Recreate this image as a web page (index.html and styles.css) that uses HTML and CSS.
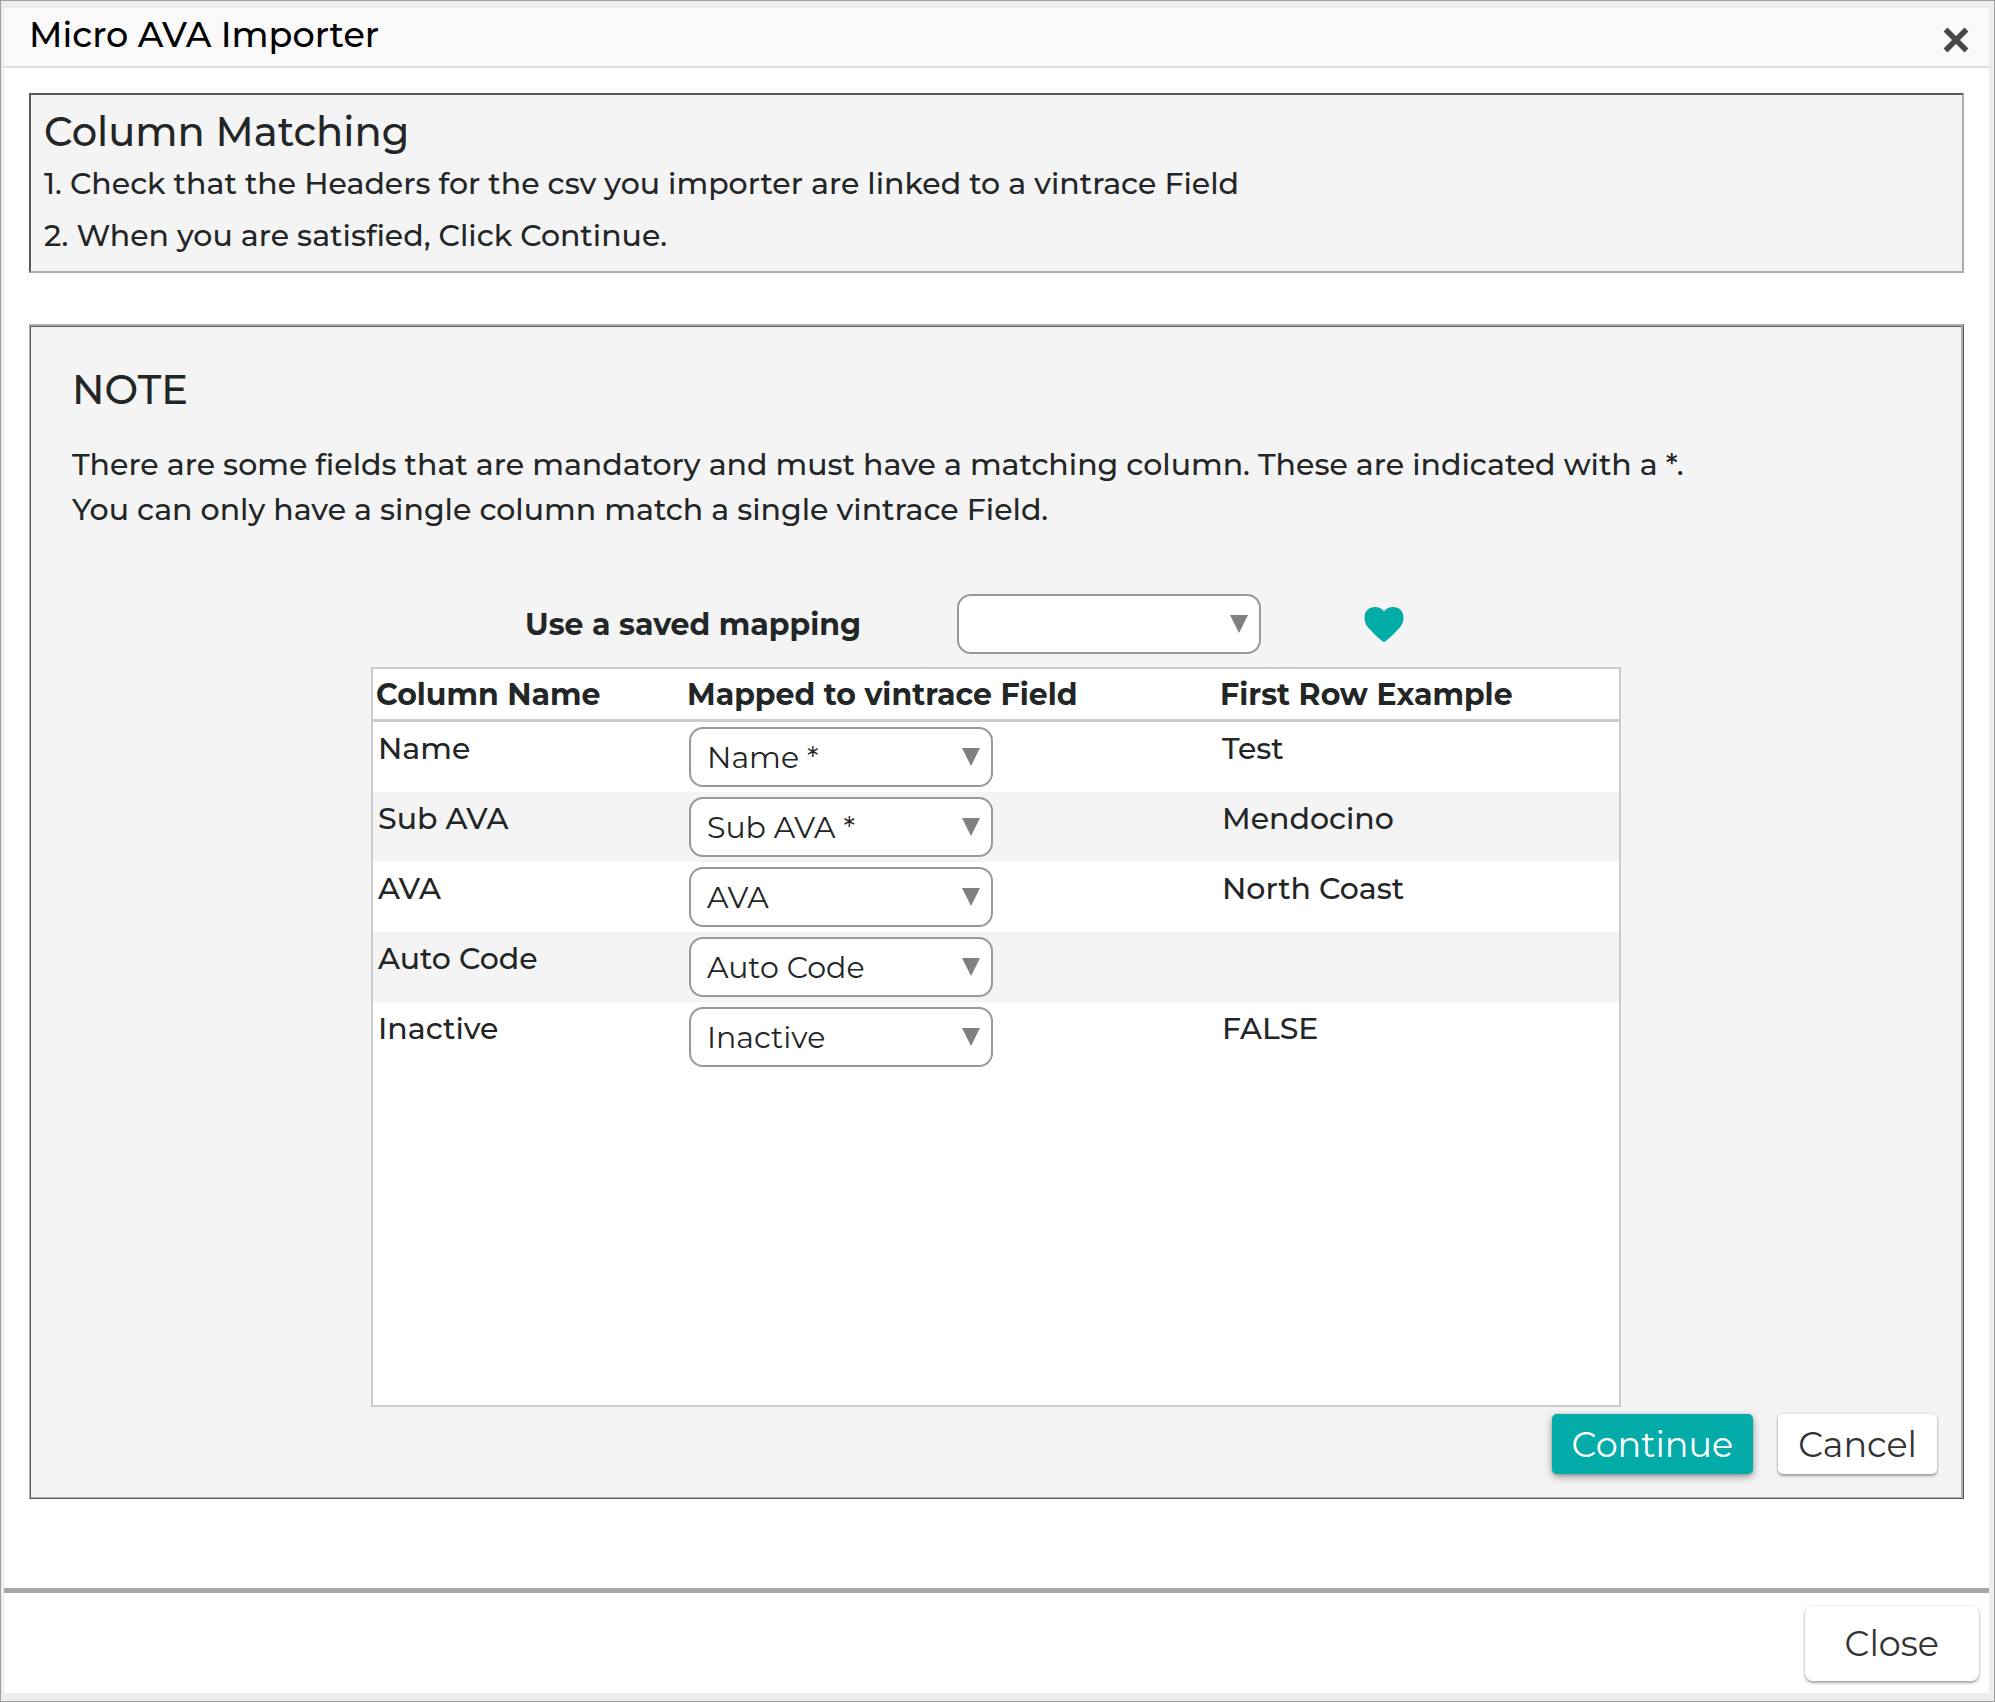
FILE: index.html
```html
<!DOCTYPE html>
<html lang="en">
<head>
  <meta charset="utf-8">
  <meta name="viewport" content="width=device-width, initial-scale=1">
  <title>Micro AVA Importer</title>
  <link rel="stylesheet" href="styles.css">
</head>
<body>
  <div class="dialog" role="dialog" aria-labelledby="dialog-title">
    <header class="dialog-header">
      <h1 class="dialog-title" id="dialog-title">Micro AVA Importer</h1>
      <button class="icon-button dialog-dismiss" type="button" aria-label="Close dialog">
        <svg width="26" height="26" viewBox="0 0 26 26" aria-hidden="true">
          <path d="M2.500 2.500 L23.500 23.500 M23.500 2.500 L2.500 23.500" fill="none" stroke="#474949" stroke-width="5.500"/>
        </svg>
      </button>
    </header>

    <main class="dialog-body">
      <section class="instructions">
        <h2 class="section-title">Column Matching</h2>
        <p>1. Check that the Headers for the csv you importer are linked to a vintrace Field</p>
        <p>2. When you are satisfied, Click Continue.</p>
      </section>

      <section class="matching">
        <div class="note">
          <h2 class="note-title">NOTE</h2>
          <p>There are some fields that are mandatory and must have a matching column. These are indicated with a *.<br>You can only have a single column match a single vintrace Field.</p>
        </div>

        <div class="mapping">
          <div class="saved">
            <label class="saved-label" for="saved-mapping">Use a saved mapping</label>
            <select class="select" id="saved-mapping"><option></option></select>
            <button class="icon-button saved-favourite" type="button" aria-label="Save this mapping">
              <svg width="40" height="37" viewBox="0 0 40 37" aria-hidden="true">
                <path d="M20 36 C17.500 35 11 29 6 23.500 C2 19.500 0.500 16 0.500 11.500 C0.500 5 5 1 11 1 C15 1 18 2.500 20 5.500 C22 2.500 25 1 29 1 C35 1 39.500 5 39.500 11.500 C39.500 16 38 19.500 34 23.500 C29 29 22.500 35 20 36 Z" fill="#03aca8"/>
              </svg>
            </button>
          </div>

          <div class="table-box">
            <table class="columns">
              <thead>
                <tr>
                  <th class="col-name" scope="col">Column Name</th>
                  <th class="col-field" scope="col">Mapped to vintrace Field</th>
                  <th scope="col">First Row Example</th>
                </tr>
              </thead>
              <tbody>
                <tr>
                  <td>Name</td>
                  <td><select class="select" aria-label="Field for Name"><option>Name *</option></select></td>
                  <td>Test</td>
                </tr>
                <tr>
                  <td>Sub AVA</td>
                  <td><select class="select" aria-label="Field for Sub AVA"><option>Sub AVA *</option></select></td>
                  <td>Mendocino</td>
                </tr>
                <tr>
                  <td>AVA</td>
                  <td><select class="select" aria-label="Field for AVA"><option>AVA</option></select></td>
                  <td>North Coast</td>
                </tr>
                <tr>
                  <td>Auto Code</td>
                  <td><select class="select" aria-label="Field for Auto Code"><option>Auto Code</option></select></td>
                  <td></td>
                </tr>
                <tr>
                  <td>Inactive</td>
                  <td><select class="select" aria-label="Field for Inactive"><option>Inactive</option></select></td>
                  <td>FALSE</td>
                </tr>
              </tbody>
            </table>
          </div>
        </div>

        <div class="actions">
          <button class="button button-primary" type="button">Continue</button>
          <button class="button" type="button">Cancel</button>
        </div>
      </section>
    </main>

    <footer class="dialog-footer">
      <button class="button button-large" type="button">Close</button>
    </footer>
  </div>
</body>
</html>
```
FILE: styles.css
```css
* {
  box-sizing: border-box;
}

body {
  margin: 0;
  background: #ededed;
  color: #232626;
  font-family: Montserrat, "Open Sans", sans-serif;
  font-size: 30px;
  font-weight: 500;
}

h1,
h2,
p {
  margin: 0;
}

.dialog {
  display: flex;
  flex-direction: column;
  min-height: 100vh;
  padding: 7px 5px 8px 3px;
  border: 1px solid #a0a0a0;
  background: #ededed;
}

/* Title bar */
.dialog-header {
  display: flex;
  align-items: center;
  justify-content: space-between;
  height: 60px;
  padding: 0 20px 0 25px;
  border-bottom: 2px solid #dddddd;
  background: #f9f9f9;
}

.dialog-title {
  padding-bottom: 5px;
  color: #000000;
  font-size: 35px;
  font-weight: 500;
  line-height: 52px;
}

.icon-button {
  display: flex;
  padding: 0;
  border: 0;
  background: none;
  cursor: pointer;
}

.dialog-dismiss {
  padding-top: 6px;
}

/* Body */
.dialog-body {
  flex: 1;
  padding: 25px 25px 89px;
  background: #ffffff;
}

.instructions {
  padding: 11px 13px 9px;
  border: 2px inset #aeaeae;
  background: #f4f4f4;
  line-height: 52px;
}

.section-title,
.note-title {
  font-size: 40px;
  font-weight: 500;
}

.matching {
  margin-top: 51px;
  padding: 38px 24px 23px;
  border: ridge #aeaeae;
  border-width: 3px 3px 2px 2px;
  background: #f4f4f4;
}

.note {
  padding: 0 17px;
  line-height: 45px;
}

.note-title {
  margin-bottom: 27px;
  line-height: 50px;
}

/* Mapping table with its saved-mapping row */
.mapping {
  max-width: 1250px;
  margin: 62px auto 0;
}

.saved {
  display: grid;
  grid-template-columns: 432px 304px auto;
  align-items: center;
  justify-content: start;
  padding-left: 154px;
  margin-bottom: 13px;
}

.saved-label {
  font-weight: 700;
}

.saved-favourite {
  margin-left: 103px;
}

.select {
  display: block;
  width: 304px;
  height: 60px;
  padding: 0 46px 0 16px;
  border: 2px solid #999999;
  border-radius: 14px;
  appearance: none;
  background: #ffffff url("data:image/svg+xml,%3Csvg xmlns='http://www.w3.org/2000/svg' width='18' height='18'%3E%3Cpath d='M0 0H18L9 18Z' fill='%23808080'/%3E%3C/svg%3E") no-repeat right 11px center;
  color: #232626;
  font-family: inherit;
  font-size: 30px;
  font-weight: 400;
}

.table-box {
  min-height: 740px;
  border: 2px solid #cccccc;
  background: #ffffff;
}

.columns {
  width: 100%;
  border-spacing: 0;
  table-layout: fixed;
}

.col-name {
  width: 311px;
}

.col-field {
  width: 533px;
}

.columns th {
  height: 53px;
  padding: 0 3px;
  border-bottom: 3px solid #cccccc;
  font-weight: 700;
  text-align: left;
}

.columns td {
  height: 70px;
  padding: 5px;
  line-height: 44px;
  vertical-align: top;
}

.columns tbody tr:nth-child(even) {
  background: #f4f4f4;
}

/* Buttons */
.actions {
  display: flex;
  justify-content: flex-end;
  gap: 25px;
  margin-top: 7px;
}

.button {
  height: 60px;
  padding: 0 20px;
  border: 0;
  border-radius: 5px;
  background: #ffffff;
  box-shadow: 0 2px 3px rgba(0, 0, 0, 0.35), 0 0 3px rgba(0, 0, 0, 0.12);
  color: #333333;
  font-family: inherit;
  font-size: 35px;
  font-weight: 400;
  cursor: pointer;
}

.button-primary {
  background: #03aca8;
  box-shadow: 0 3px 8px rgba(0, 0, 0, 0.35), 0 1px 3px rgba(0, 0, 0, 0.2);
  color: #ffffff;
}

.button-large {
  height: 75px;
  padding: 0 40px;
  border-radius: 8px;
}

.dialog-footer {
  display: flex;
  justify-content: flex-end;
  padding: 13px 10px 12px;
  border-top: 5px solid #aaa6a3;
  background: #ffffff;
}
```
